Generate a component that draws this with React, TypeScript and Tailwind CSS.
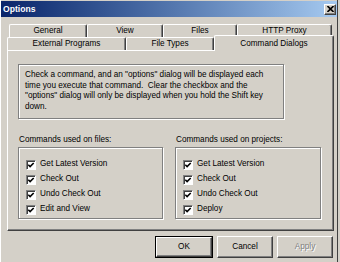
import React from "react";

const raised =
  "border border-t-white border-l-white border-r-[#404040] border-b-[#404040] shadow-[inset_-1px_-1px_0_#808080]";

function Check({ label }: { label: string }) {
  return (
    <div className="h-[15px] flex items-center">
      <div className="w-[10px] h-[10px] bg-white border border-t-[#808080] border-l-[#808080] border-r-white border-b-white shadow-[inset_1px_1px_0_#404040] flex items-center justify-center">
        <svg width="8" height="8" viewBox="0 0 8 8">
          <path d="M1.3 3.8 L3.1 5.6 L6.7 2" stroke="#000" strokeWidth="1.6" fill="none" />
        </svg>
      </div>
      <span className="ml-[4px]">{label}</span>
    </div>
  );
}

function Tab({ w, label }: { w: number; label: string }) {
  return (
    <div
      className={`h-[13px] flex items-center justify-center rounded-t-[2px] border-t border-l border-r border-t-white border-l-white border-r-[#404040] shadow-[inset_-1px_0_0_#808080]`}
      style={{ width: w }}
    >
      {label}
    </div>
  );
}

function Group({ title, items, w }: { title: string; items: string[]; w: number }) {
  return (
    <div className="flex flex-col" style={{ width: w }}>
      <div className="h-[10px] leading-[10px] pl-[1px]">{title}</div>
      <div className="mt-[2px] h-[72px] border border-[#808080] shadow-[inset_1px_1px_0_#fff,1px_1px_0_#fff] pt-[9px] pl-[7px]">
        {items.map((t) => (
          <Check key={t} label={t} />
        ))}
      </div>
    </div>
  );
}

export default function App() {
  return (
    <div
      className="w-[340px] h-[262px] bg-[#d4d0c8] overflow-hidden text-black text-[8.2px]"
      style={{ fontFamily: '"Liberation Sans", Arial, sans-serif' }}
    >
      <div className="w-[338px] h-[262px] border-l border-l-white border-r border-r-[#404040] flex flex-col">
        {/* title bar */}
        <div className="mt-[1px] h-[16px] flex items-center bg-linear-to-r from-[#0a246a] to-[#a6caf0] pl-[2px] pr-[1px]">
          <span className="text-white font-bold text-[8.6px]">Options</span>
          <div
            className={`ml-auto w-[12px] h-[11px] bg-[#d4d0c8] flex items-center justify-center ${raised}`}
          >
            <svg width="7" height="6" viewBox="0 0 7 6">
              <path d="M0.5 0 L6.5 6 M6.5 0 L0.5 6" stroke="#000" strokeWidth="1.6" />
            </svg>
          </div>
        </div>

        {/* tabs row 1 */}
        <div className="mt-[7px] ml-[8px] flex">
          <Tab w={78} label="General" />
          <Tab w={76} label="View" />
          <Tab w={74} label="Files" />
          <Tab w={95} label="HTTP Proxy" />
        </div>
        {/* tabs row 2 */}
        <div className="ml-[6px] h-[13px] flex items-end">
          <Tab w={119} label="External Programs" />
          <Tab w={88} label="File Types" />
          <div className="relative z-10 w-[120px] h-[16px] mb-[-1px] bg-[#d4d0c8] rounded-t-[2px] border-t border-l border-r border-t-white border-l-white border-r-[#404040] shadow-[inset_-1px_0_0_#808080] flex items-start justify-center pt-[2px]">
            Command Dialogs
          </div>
        </div>

        {/* panel */}
        <div className={`ml-[6px] w-[327px] h-[181px] ${raised} flex flex-col`}>
          <div className="ml-[10px] mt-[13px] w-[266px] h-[55px] border border-[#808080] shadow-[inset_1px_1px_0_#fff,1px_1px_0_#fff] pl-[6px] pt-[5px] leading-[10.7px]">
            Check a command, and an "options" dialog will be displayed each
            <br />
            time you execute that command.&nbsp; Clear the checkbox and the
            <br />
            "options" dialog will only be displayed when you hold the Shift key
            <br />
            down.
          </div>
          <div className="ml-[10px] mt-[16px] flex gap-[12px]">
            <Group
              title="Commands used on files:"
              w={145}
              items={["Get Latest Version", "Check Out", "Undo Check Out", "Edit and View"]}
            />
            <Group
              title="Commands used on projects:"
              w={146}
              items={["Get Latest Version", "Check Out", "Undo Check Out", "Deploy"]}
            />
          </div>
        </div>

        {/* buttons */}
        <div className="mt-[5px] ml-[154px] flex gap-[4px]">
          <div className="w-[58px] h-[22px] border border-black">
            <div className={`w-full h-full flex items-center justify-center ${raised}`}>OK</div>
          </div>
          <div className={`w-[56px] h-[22px] flex items-center justify-center ${raised}`}>Cancel</div>
          <div
            className={`w-[56px] h-[22px] flex items-center justify-center text-[#808080] [text-shadow:1px_1px_0_#fff] ${raised}`}
          >
            Apply
          </div>
        </div>
      </div>
    </div>
  );
}
